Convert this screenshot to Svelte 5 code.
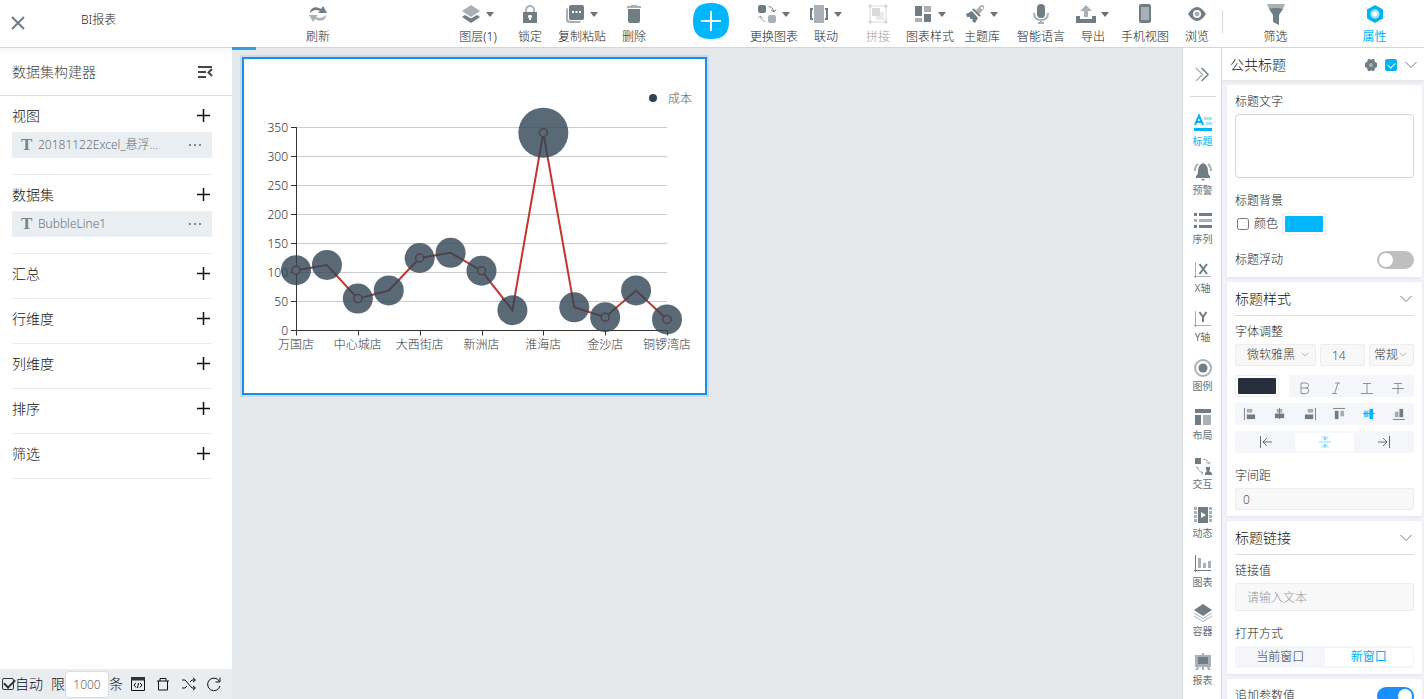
<script>
  // icon layers: [path, style], every icon is drawn on an 18x18 grid
  const icons = {
    refresh: [
      ['M1 8C1 4 5 1 10 3L12 4L14 1L18 8L9 8L11 6C7 4 4 5 1 8Z', 'dark'],
      ['M17 10C17 14 13 17 8 15L6 14L4 17L0 10L9 10L7 12C11 14 14 13 17 10Z', 'light']
    ],
    layers: [
      ['M0 12L3 10L9 13.5L15 10L18 12L9 18Z', 'dark'],
      ['M9 0L18 6L9 12L0 6Z', 'light']
    ],
    lock: [
      ['M5 8V5A4 4 0 0 1 13 5V8', 'light-line'],
      ['M2 7H16V18H2ZM9 10A1.5 1.5 0 0 0 8 13V15H10V13A1.5 1.5 0 0 0 9 10Z', 'dark']
    ],
    copy: [
      ['M2 3V13Q2 16 5 16H15Q15 18 12 18H3Q0 18 0 15V6Q0 3 2 3Z', 'light'],
      ['M5 0H16Q18 0 18 2V13Q18 15 16 15H5Q3 15 3 13V2Q3 0 5 0ZM6 6V8H8V6ZM9.5 6V8H11.5V6ZM13 6V8H15V6Z', 'dark']
    ],
    trash: [
      ['M2 1H6V0H12V1H16V3H2Z', 'light'],
      ['M3 4H15V16Q15 18 13 18H5Q3 18 3 16Z', 'dark']
    ],
    swap: [
      ['M2 0H6Q8 0 8 2V6Q8 8 6 8H2Q0 8 0 6V2Q0 0 2 0Z', 'dark'],
      ['M12 10H16Q18 10 18 12V16Q18 18 16 18H12Q10 18 10 16V12Q10 10 12 10Z', 'light'],
      ['M10.5 1.5Q15 2 16 7M16 7L13 5M16 7L18 4.5', 'dark-thin'],
      ['M7.5 16.5Q3 16 2 11M2 11L0 13.5M2 11L5 13', 'light-thin']
    ],
    link: [
      ['M4 0H14V18H4Z', 'light'],
      ['M3 4H1V14H3M15 4H17V14H15', 'dark-line']
    ],
    splice: [
      ['M1 1H17V17H1ZM0 0H2V2H0ZM16 0H18V2H16ZM0 16H2V18H0ZM16 16H18V18H16Z', 'light-thin'],
      ['M3 3H11V11H3Z', 'light'],
      ['M11 7H15V15H7V11H11Z', 'faint']
    ],
    tiles: [
      ['M1 1H8V11H1ZM10 9H17V17H10Z', 'dark'],
      ['M1 13H8V17H1ZM10 1H17V7H10Z', 'light']
    ],
    brush: [
      ['M10 5L14 1Q16 -1 18 1Q19 3 17 5L13 9ZM15 2V4H17V2Z', 'light'],
      ['M0 9L6 6L12 13L9 18L6 16L7 14L4 14L4 12L1 12Z', 'dark'],
      ['M7 4L14 11', 'dark-line']
    ],
    mic: [
      ['M9 -1A4 4 0 0 1 13 3V9A4 4 0 0 1 5 9V3A4 4 0 0 1 9 -1Z', 'dark'],
      ['M2 8Q2 15 9 15Q16 15 16 8M9 15V18M6 18H12', 'light-line']
    ],
    export: [
      ['M9 0L15 6H11V12H7V6H3Z', 'light'],
      ['M1 11V16H17V11', 'dark-bold']
    ],
    phone: [
      ['M5 -1H13Q15 -1 15 1V16Q15 18 13 18H5Q3 18 3 16V1Q3 -1 5 -1ZM5 2V15H13V2Z', 'dark'],
      ['M5 2H13V15H5Z', 'light']
    ],
    eye: [
      ['M0 9Q9 -5 18 9Q9 23 0 9ZM9 5A4 4 0 0 0 9 13A4 4 0 0 0 9 5Z', 'dark'],
      ['M9 6.5A2.5 2.5 0 0 1 9 11.5A2.5 2.5 0 0 1 9 6.5Z', 'light']
    ],
    filter: [
      ['M0 -1H18L16 4H2Z', 'light'],
      ['M2 4Q8 2 16 4L12 10V20L6 17V10Z', 'dark']
    ],
    hexagon: [
      ['M9 0L17 4.5V13.5L9 18L1 13.5V4.5Z', 'dark'],
      ['M9 4.5A4.5 4.5 0 0 1 9 13.5A4.5 4.5 0 0 1 9 4.5Z', 'paper'],
      ['M9 4.5A4.5 4.5 0 0 1 9 13.5A4.5 4.5 0 0 1 9 4.5Z', 'faint'],
      ['M9 6.5A2.5 2.5 0 0 1 9 11.5A2.5 2.5 0 0 1 9 6.5Z', 'paper']
    ],
    title: [
      ['M1 11L5 1.5L9 11M2.5 8H7.5', 'dark-line'],
      ['M0 14H18V17H0Z', 'dark'],
      ['M10 3H18V6H10ZM12 8H18V11H12Z', 'faint']
    ],
    bell: [
      ['M9 0Q14 2 14 8Q14 12 16 13V15H2V13Q4 12 4 8Q4 2 9 0ZM7 16H11L9 18Z', 'dark'],
      ['M4 1Q1 3 1 8M14 1Q17 3 17 8', 'light-line']
    ],
    list: [
      ['M0 1H3V4H0ZM5 1H18V4H5ZM0 13H3V16H0ZM5 13H18V16H5Z', 'dark'],
      ['M0 7H3V10H0ZM5 7H18V10H5Z', 'light']
    ],
    xAxis: [
      ['M1.5 1V17M0 15.5H17', 'light-thin'],
      ['M5.5 3L13 13M13 3L5.5 13', 'dark-line']
    ],
    yAxis: [
      ['M1.5 1V17M0 15.5H17', 'light-thin'],
      ['M5.5 2L9 7L12.5 2M9 7V12', 'dark-line']
    ],
    legend: [
      ['M9 1A8 8 0 0 1 9 17A8 8 0 0 1 9 1Z', 'light-line'],
      ['M9 4.5A4.5 4.5 0 0 1 9 13.5A4.5 4.5 0 0 1 9 4.5Z', 'dark']
    ],
    layout: [
      ['M1 1H17V5H1ZM1 7H7V17H1Z', 'dark'],
      ['M9 7H17V17H9Z', 'light']
    ],
    interact: [
      ['M1 1H7V7H1ZM12 10H16V13L15 14L18 16V18H11V16L13 14L12 13Z', 'dark'],
      ['M9 2Q14 2 15 6M12 5L15 7L17 5M2 9L4 12M4 10Q4 15 9 16M7 14L9 16L7 18', 'light-thin']
    ],
    film: [
      ['M4 1H14V17H4ZM7 6V12L12 9Z', 'dark'],
      ['M0 1H3V4H0ZM0 5H3V8H0ZM0 9H3V12H0ZM0 13H3V16H0ZM15 1H18V4H15ZM15 5H18V8H15ZM15 9H18V12H15ZM15 13H18V16H15Z', 'light']
    ],
    bars: [
      ['M1.5 0V17M0 15.5H17', 'dark-thin'],
      ['M4 3H7V13H4ZM9 8H12V13H9ZM14 6H17V13H14Z', 'light']
    ],
    stack: [
      ['M9 0L18 6L9 12L0 6Z', 'dark'],
      ['M0 9L9 14.5L18 9M0 12L9 17.5L18 12', 'light-thin']
    ],
    board: [
      ['M8 0H10V2H17V14H15L17 17H14L13 14H10V17H8V14H5L4 17H1L3 14H1V2H8ZM4 4V11H14V4Z', 'light'],
      ['M4 4H14V11H4Z', 'dark']
    ]
  };

  const editTools = [
    { icon: 'layers', label: '图层(1)', menu: true },
    { icon: 'lock', label: '锁定' },
    { icon: 'copy', label: '复制粘贴', menu: true },
    { icon: 'trash', label: '删除' }
  ];
  const chartTools = [
    { icon: 'swap', label: '更换图表', menu: true },
    { icon: 'link', label: '联动', menu: true },
    { icon: 'splice', label: '拼接', disabled: true },
    { icon: 'tiles', label: '图表样式', menu: true },
    { icon: 'brush', label: '主题库', menu: true }
  ];
  const pageTools = [
    { icon: 'mic', label: '智能语言' },
    { icon: 'export', label: '导出', menu: true },
    { icon: 'phone', label: '手机视图' },
    { icon: 'eye', label: '浏览' }
  ];

  const sections = [
    { name: '视图', item: '20181122Excel_悬浮...' },
    { name: '数据集', item: 'BubbleLine1' },
    { name: '汇总' },
    { name: '行维度' },
    { name: '列维度' },
    { name: '排序' },
    { name: '筛选' }
  ];

  const rail = [
    ['title', '标题'], ['bell', '预警'], ['list', '序列'], ['xAxis', 'X轴'],
    ['yAxis', 'Y轴'], ['legend', '图例'], ['layout', '布局'], ['interact', '交互'],
    ['film', '动态'], ['bars', '图表'], ['stack', '容器'], ['board', '报表']
  ];

  const alignIcons = [
    ['左对齐', 'M0.5 0V13', 'M3 1H9V5H3Z', 'M3 7H12V12H3Z'],
    ['水平居中', 'M6 0V12', 'M3 1H9V5H3Z', 'M1 6H11V11H1Z'],
    ['右对齐', 'M12.5 0V13', 'M4 1H10V5H4Z', 'M1 7H10V12H1Z'],
    ['顶对齐', 'M0 0.5H13', 'M8 3H12V9H8Z', 'M2 3H6V12H2Z'],
    ['垂直居中', 'M0 6H13', 'M1 3H6V10H1Z', 'M7 1H11V12H7Z'],
    ['底对齐', 'M0 12.5H13', 'M2 4H6V10H2Z', 'M7 1H11V10H7Z']
  ];

  const values = [104, 113, 55, 69, 125, 134, 103, 35, 341, 40, 23, 69, 19];
  const shops = ['万国店', '中心城店', '大西街店', '新洲店', '淮海店', '金沙店', '铜锣湾店'];
  const ticks = [0, 50, 100, 150, 200, 250, 300, 350];

  const left = 52;
  const bottom = 271.5;
  const width = 371;
  const px = (i) => left + (i * width) / (values.length - 1);
  const py = (v) => bottom - v * 0.58;
  const line = values.map((v, i) => px(i) + ',' + py(v)).join(' ');

  let activeTab = $state('标题');
  let auto = $state(true);
  let limit = $state('1000');
  let titleText = $state('');
  let useColor = $state(false);
  let floating = $state(false);
  let append = $state(true);
  let spacing = $state('0');
  let align = $state('垂直居中');
  let target = $state('新窗口');
</script>

{#snippet icon(name)}
  <svg class="icon" viewBox="0 0 18 18" aria-hidden="true">
    {#each icons[name] as [d, kind]}
      <path {d} class={kind} fill-rule="evenodd" />
    {/each}
  </svg>
{/snippet}

{#snippet tool(t)}
  <button class="tool" disabled={t.disabled}>
    <span class="tool-icon">
      {@render icon(t.icon)}
      {#if t.menu}<span class="caret"></span>{/if}
    </span>
    <span>{t.label}</span>
  </button>
{/snippet}

{#snippet chevron()}
  <svg class="chevron" viewBox="0 0 12 8" aria-hidden="true"><path d="M0.5 1L6 6.5L11.5 1" /></svg>
{/snippet}

<div class="app">
  <header>
    <div class="brand">
      <button class="close" aria-label="关闭">
        <svg viewBox="0 0 14 14"><path d="M1 1L13 13M13 1L1 13" /></svg>
      </button>
      <span class="name">BI报表</span>
    </div>
    <div class="first">{@render tool({ icon: 'refresh', label: '刷新' })}</div>
    <nav class="tools">
      {#each editTools as t}{@render tool(t)}{/each}
      <button class="add" aria-label="添加">
        <svg viewBox="0 0 36 36">
          <path class="blob" d="M18 0C31 0 36 6 36 18S31 36 18 36S0 30 0 18S5 0 18 0Z" />
          <path class="cross" d="M18 8V28M8 18H28" />
        </svg>
      </button>
      {#each chartTools as t}{@render tool(t)}{/each}
      <span class="gap"></span>
      {#each pageTools as t}{@render tool(t)}{/each}
    </nav>
    <div class="modes">
      {@render tool({ icon: 'filter', label: '筛选' })}
      <div class="on">{@render tool({ icon: 'hexagon', label: '属性' })}</div>
    </div>
  </header>

  <main>
    <aside class="builder">
      <div class="builder-head">
        <h2>数据集构建器</h2>
        <button aria-label="收起">
          <svg class="fold" viewBox="0 0 14 12"><path d="M0 1H14M0 6H8M0 11H8M14 3L10.5 6.5L14 10" /></svg>
        </button>
      </div>
      <div class="sections">
        {#each sections as s}
          <section>
            <div class="section-head">
              <h3>{s.name}</h3>
              <button aria-label={'添加' + s.name}>
                <svg class="plus" viewBox="0 0 13 13"><path d="M6.5 0V13M0 6.5H13" /></svg>
              </button>
            </div>
            {#if s.item}
              <div class="field">
                <b>T</b>
                <span>{s.item}</span>
                <button class="dots" aria-label="更多"><i></i><i></i><i></i></button>
              </div>
            {/if}
          </section>
        {/each}
      </div>
      <footer>
        <label class="auto"><input type="checkbox" bind:checked={auto} />自动</label>
        <label class="limit">限<input type="text" bind:value={limit} />条</label>
        <div class="actions">
          <button aria-label="脚本">
            <svg viewBox="0 0 14 14"><path d="M0.5 0.5H13.5V13.5H0.5ZM5 6L3 8L5 10.5M9 6L11 8L9 10.5M7.5 6L6.5 11" /><path d="M0 0H14V3.5H0Z" class="solid" /></svg>
          </button>
          <button aria-label="清除">
            <svg viewBox="0 0 14 14"><path d="M1 4H13M4 4V1.5H10V4M2.5 4V13H11.5V4" /></svg>
          </button>
          <button aria-label="随机">
            <svg viewBox="0 0 14 14"><path d="M0 3H3L10 11H13M0 11H3L5 9M8 5L10 3H13M11 1L13.5 3L11 5M11 9L13.5 11L11 13" /></svg>
          </button>
          <button aria-label="刷新">
            <svg viewBox="0 0 14 14"><path d="M12.5 4.5A6.3 6.3 0 1 0 13 9M13 0.5V5H8.5" /></svg>
          </button>
        </div>
      </footer>
    </aside>

    <div class="canvas">
      <div class="progress"></div>
      <div class="widget">
        <svg viewBox="0 0 461 334" role="img" aria-label="成本">
          {#each ticks as t}
            <line class="grid" x1={left} x2={left + width} y1={py(t)} y2={py(t)} />
            <line class="axis" x1={left - 5} x2={left} y1={py(t)} y2={py(t)} />
            <text x="44" y={py(t) + 4} text-anchor="end">{t}</text>
          {/each}
          <path class="axis" d="M52.5 68V271.5H423.5" />
          {#each shops as shop, i}
            <line class="axis" x1={Math.round(px(i * 2)) + 0.5} x2={Math.round(px(i * 2)) + 0.5} y1={bottom} y2={bottom + 5} />
            <text x={px(i * 2)} y="290" text-anchor="middle">{shop}</text>
          {/each}
          <polyline points={line} />
          {#each values as v, i}
            {#if i % 2 == 0}<circle class="dot" cx={px(i)} cy={py(v)} r="4" />{/if}
          {/each}
          {#each values as v, i}
            <circle class="bubble" cx={px(i)} cy={py(v)} r={v > 300 ? 25 : 15} />
          {/each}
          <circle class="key" cx="409" cy="39" r="4" />
          <text class="legend" x="424" y="44">成本</text>
        </svg>
      </div>
    </div>

    <nav class="rail">
      <button class="expand" aria-label="展开">
        <svg viewBox="0 0 16 16"><path class="light-thin" d="M1 1L8 8L1 15" /><path d="M7 1L14 8L7 15" /></svg>
      </button>
      {#each rail as [name, label]}
        <button class="tab" class:active={activeTab == label} onclick={() => (activeTab = label)}>
          {@render icon(name)}
          <span>{label}</span>
        </button>
      {/each}
    </nav>

    <aside class="panel">
      <div class="panel-head">
        <h2>公共标题</h2>
        <svg class="gear" viewBox="0 0 12 12" aria-hidden="true">
          <path d="M3 0H5L6 1L7 0H9L10 3L12 4V8L10 9L9 12H7L6 11L5 12H3L2 9L0 8V4L2 3Z" />
          <circle cx="6" cy="6" r="2" />
        </svg>
        <input type="checkbox" class="tick" checked aria-label="显示标题" />
        {@render chevron()}
      </div>

      <div class="cards">
        <div class="card">
          <label class="caption" for="title-text">标题文字</label>
          <textarea id="title-text" bind:value={titleText}></textarea>
          <div class="caption space">标题背景</div>
          <div class="background">
            <label><input type="checkbox" class="box" bind:checked={useColor} />颜色</label>
            <button class="swatch" aria-label="背景颜色"><span class="blue"></span></button>
          </div>
          <label class="switch-row"><span>标题浮动</span><input type="checkbox" class="switch" bind:checked={floating} /></label>
        </div>

        <div class="card">
          <div class="card-head"><h3>标题样式</h3>{@render chevron()}</div>
          <div class="caption">字体调整</div>
          <div class="fonts">
            <span class="select wide">
              <select aria-label="字体"><option>微软雅黑</option></select>{@render chevron()}
            </span>
            <input class="size" type="text" value="14" aria-label="字号" />
            <span class="select">
              <select aria-label="字重"><option>常规</option></select>{@render chevron()}
            </span>
          </div>
          <div class="styles">
            <button class="swatch" aria-label="文字颜色"><span class="ink"></span></button>
            <div class="bar">
              <button aria-label="粗体"><svg viewBox="0 0 12 12"><path d="M2 1H7A2.5 2.5 0 0 1 7 6H2M7 6A2.7 2.7 0 0 1 7 11.5H2V1" /></svg></button>
              <button aria-label="斜体"><svg viewBox="0 0 12 12"><path d="M5 1H10M2 11.5H7M8 1L4.5 11.5" /></svg></button>
              <button aria-label="下划线"><svg viewBox="0 0 12 12"><path d="M2 1.5H10M6 1.5V11M0 11.5H12" /></svg></button>
              <button aria-label="删除线"><svg viewBox="0 0 12 12"><path d="M2 1.5H10M6 1.5V12M0 6.5H12" /></svg></button>
            </div>
          </div>
          <div class="bar">
            {#each alignIcons as [label, rule, light, dark]}
              <button class:active={align == label} aria-label={label} onclick={() => (align = label)}>
                <svg viewBox="0 0 13 13"><path d={rule} /><path class="light" d={light} /><path class="dark" d={dark} /></svg>
              </button>
            {/each}
          </div>
          <div class="bar picks">
            <button aria-label="靠左"><svg viewBox="0 0 12 12"><path d="M0.5 0V12M12 6H3M7 2L3 6L7 10" /></svg></button>
            <button class="active picked" aria-label="居中"><svg viewBox="0 0 12 12"><path class="light-thin" d="M0 6H12" /><path d="M3 0.5L6 3.5L9 0.5M3 11.5L6 8.5L9 11.5M6 0V4M6 8V12" /></svg></button>
            <button aria-label="靠右"><svg viewBox="0 0 12 12"><path d="M11.5 0V12M0 6H9M5 2L9 6L5 10" /></svg></button>
          </div>
          <label class="caption space" for="spacing">字间距</label>
          <input class="text" id="spacing" type="text" bind:value={spacing} />
        </div>

        <div class="card">
          <div class="card-head"><h3>标题链接</h3>{@render chevron()}</div>
          <label class="caption" for="link-value">链接值</label>
          <input class="text tall" id="link-value" type="text" placeholder="请输入文本" />
          <div class="caption space">打开方式</div>
          <div class="bar picks">
            {#each ['当前窗口', '新窗口'] as t}
              <button class:active={target == t} class:picked={target == t} onclick={() => (target = t)}>{t}</button>
            {/each}
          </div>
        </div>

        <div class="card">
          <label class="switch-row"><span>追加参数值</span><input type="checkbox" class="switch" bind:checked={append} /></label>
        </div>
      </div>
    </aside>
  </main>
</div>

<style>
  :global(body) {
    margin: 0;
    overflow: hidden;
  }
  .app {
    height: 100vh;
    display: flex;
    flex-direction: column;
    font: 300 12px/16px "Noto Sans", "Noto Sans CJK SC", sans-serif;
    color: #222;
    background: #e5e9ec;
  }
  .app * {
    box-sizing: border-box;
  }
  button, input, select, textarea {
    font: inherit;
    color: inherit;
    margin: 0;
  }
  button {
    padding: 0;
    border: 0;
    background: none;
    cursor: pointer;
  }
  h2, h3 {
    margin: 0;
    font-size: 14px;
    font-weight: inherit;
    line-height: 22px;
  }
  svg {
    display: block;
    fill: none;
    stroke: currentColor;
    overflow: visible;
  }

  /* icon layers */
  .icon {
    width: 18px;
    height: 18px;
    color: #707d85;
  }
  .dark, .light, .faint, .paper {
    fill: currentColor;
    stroke: none;
  }
  .light, .light-line, .light-thin {
    opacity: .6;
  }
  .faint {
    opacity: .35;
  }
  .paper {
    fill: #fff;
  }
  .dark-line, .light-line {
    stroke-width: 2;
  }
  .dark-bold {
    stroke-width: 4;
  }

  /* top bar */
  header {
    flex: none;
    display: flex;
    height: 48px;
    background: #fff;
    border-bottom: 1px solid #d3d6d8;
  }
  .brand {
    width: 232px;
    display: flex;
    align-items: flex-start;
    padding: 12px 0 0 11px;
  }
  .close {
    color: #707d85;
    margin-top: 4px;
  }
  .close svg {
    width: 14px;
    height: 14px;
    stroke-width: 2;
  }
  .name {
    margin-left: 56px;
  }
  .first {
    margin-left: 60px;
  }
  .tools {
    flex: 1;
    display: flex;
    justify-content: flex-end;
  }
  .tool {
    width: 52px;
    padding-top: 5px;
    display: flex;
    flex-direction: column;
    align-items: center;
    gap: 6px;
    white-space: nowrap;
  }
  .tool:disabled {
    opacity: .45;
  }
  .tool-icon {
    display: flex;
    align-items: center;
    gap: 6px;
  }
  .caret {
    border: 4px solid transparent;
    border-top: 5px solid #707070;
    border-bottom: 0;
  }
  .add {
    margin: 0 19px 0 33px;
  }
  .add svg {
    width: 36px;
    height: 36px;
    margin-bottom: 6px;
    stroke: none;
  }
  .blob {
    fill: #00b7ff;
  }
  .cross {
    stroke: #fff;
    stroke-width: 2;
  }
  .gap {
    width: 7px;
  }
  .modes {
    position: relative;
    width: 201px;
    padding-left: 3px;
    display: flex;
    justify-content: space-around;
  }
  .modes::before {
    content: "";
    position: absolute;
    left: -1px;
    top: 11px;
    height: 22px;
    border-left: 1px solid #d3d6d8;
  }
  .on, .on .icon {
    color: #00b2f7;
    font-weight: 400;
  }

  main {
    flex: 1;
    min-height: 0;
    display: flex;
  }

  /* dataset builder */
  .builder {
    width: 232px;
    display: flex;
    flex-direction: column;
    background: #fff;
    color: #111;
  }
  .builder-head {
    height: 48px;
    display: flex;
    align-items: center;
    justify-content: space-between;
    padding: 0 20px 0 12px;
    border-bottom: 1px solid #dcdfe2;
    background: linear-gradient(#f6f6f6, #fff 8px);
    color: #444;
  }
  .fold {
    width: 14px;
    height: 12px;
    stroke-width: 2;
  }
  .sections {
    flex: 1;
    padding: 0 20px 0 12px;
  }
  section {
    padding: 9px 0 13px;
    border-bottom: 1px solid #e8ecf0;
  }
  .section-head {
    display: flex;
    justify-content: space-between;
    align-items: flex-start;
    padding-right: 2px;
  }
  .plus {
    width: 13px;
    height: 13px;
    margin-top: 4px;
    stroke-width: 1.5;
  }
  .field {
    height: 26px;
    margin: 5px 0 3px;
    padding: 0 11px 0 9px;
    display: flex;
    align-items: center;
    background: #e9eef3;
    border-radius: 2px;
    color: #707070;
  }
  .field b {
    width: 17px;
    font: 700 17px/20px "Liberation Serif", serif;
    color: #808080;
  }
  .dots {
    margin-left: auto;
    display: flex;
    gap: 3px;
  }
  .dots i {
    width: 2px;
    height: 2px;
    background: #888;
  }
  footer {
    height: 30px;
    display: flex;
    align-items: center;
    gap: 8px;
    padding: 0 11px 0 2px;
    background: #e9edf0;
    font-size: 14px;
  }
  footer label {
    display: flex;
    align-items: center;
    white-space: nowrap;
  }
  .auto input {
    appearance: none;
    position: relative;
    width: 12px;
    height: 12px;
    margin-right: 1px;
    border: 1px solid #333;
    border-radius: 2px;
  }
  .auto input:checked::before {
    content: "";
    position: absolute;
    left: 3px;
    top: -2px;
    width: 5px;
    height: 9px;
    border: solid #333;
    border-width: 0 2px 2px 0;
    transform: rotate(45deg);
  }
  .limit input {
    width: 44px;
    height: 27px;
    padding: 0;
    text-align: center;
    font-size: 12px;
    color: #666;
    border: 1px solid #ddd;
    border-radius: 4px;
  }
  .actions {
    flex: 1;
    display: flex;
    justify-content: space-between;
  }
  .actions svg {
    width: 14px;
    height: 14px;
  }
  .solid {
    fill: #333;
    stroke: none;
  }

  /* canvas */
  .canvas {
    position: relative;
    flex: 1;
    background: #e5e9ec;
  }
  .progress {
    position: absolute;
    top: -1px;
    width: 24px;
    height: 3px;
    background: #349fe0;
  }
  .widget {
    position: absolute;
    left: 10px;
    top: 9px;
    width: 465px;
    border: 2px solid #1890eb;
    background: #fff;
    box-shadow: 0 0 0 2px #cdd8ec;
  }
  .grid {
    stroke: #ccc;
  }
  .axis {
    stroke: #333;
  }
  polyline {
    stroke: #c23531;
    stroke-width: 2;
  }
  .dot {
    fill: #fff;
    stroke: #c23531;
    stroke-width: 1.5;
  }
  .bubble {
    fill: #2f4554;
    fill-opacity: .8;
    stroke: none;
  }
  .key {
    fill: #2f4554;
    stroke: none;
  }
  text {
    fill: #333;
    stroke: none;
    font-size: 12px;
  }
  .legend {
    fill: #555;
  }

  /* icon rail */
  .rail {
    width: 40px;
    padding-left: 1px;
    display: flex;
    flex-direction: column;
    align-items: center;
    background: #fff;
    border: 1px solid #d6dadd;
    border-width: 0 1px;
    overflow: hidden;
  }
  .expand {
    flex: none;
    width: 26px;
    height: 49px;
    display: grid;
    place-items: center;
    border-bottom: 1px solid #d6dadd;
    margin-bottom: 12px;
    padding-top: 4px;
    color: #707d85;
  }
  .expand svg {
    width: 15px;
    height: 15px;
    stroke-width: 1.5;
  }
  .tab {
    flex: none;
    height: 49px;
    padding-top: 5px;
    display: flex;
    flex-direction: column;
    align-items: center;
    gap: 2px;
    font-size: 10px;
    font-weight: 400;
    line-height: 14px;
    color: #667078;
  }
  .tab.active, .tab.active .icon {
    color: #00b2f7;
  }

  /* property panel */
  .panel {
    width: 202px;
    display: flex;
    flex-direction: column;
    background: #f1f3f8;
    overflow: hidden;
  }
  .panel-head {
    flex: none;
    height: 32px;
    display: flex;
    align-items: center;
    gap: 8px;
    padding: 1px 7px 0 8px;
    background: #fff;
    box-shadow: 0 1px 4px #ddd;
    color: #111;
  }
  .panel-head h2 {
    flex: 1;
  }
  .gear {
    width: 12px;
    height: 12px;
    fill: #707d85;
    stroke: none;
  }
  .gear circle {
    fill: #a9b1b6;
  }
  .tick {
    appearance: none;
    position: relative;
    width: 12px;
    height: 12px;
    border: 1px solid #00b2f7;
    border-radius: 2px;
  }
  .tick:checked {
    background: #00b2f7;
  }
  .tick:checked::before {
    content: "";
    position: absolute;
    left: 3px;
    top: 1px;
    width: 4px;
    height: 6px;
    border: solid #fff;
    border-width: 0 1px 1px 0;
    transform: rotate(45deg);
  }
  .chevron {
    width: 12px;
    height: 8px;
    color: #707d85;
  }
  .cards {
    padding: 5px 2px 0 5px;
    display: flex;
    flex-direction: column;
    gap: 5px;
  }
  .card {
    padding: 8px 8px 6px;
    background: #fff;
    border-radius: 2px;
    box-shadow: 0 1px 3px #e0e2e8;
  }
  .card-head {
    display: flex;
    align-items: center;
    justify-content: space-between;
    height: 26px;
    padding: 0 2px 8px 0;
    margin-bottom: 7px;
    border-bottom: 1px solid #dcdfe2;
    color: #111;
  }
  .caption {
    display: block;
    padding-top: 1px;
    margin-bottom: 4px;
  }
  .space {
    margin-top: 14px;
  }
  textarea {
    display: block;
    width: 100%;
    height: 64px;
    border: 1px solid #d3d6d8;
    border-radius: 4px;
    resize: none;
  }
  .background {
    display: flex;
    align-items: center;
    gap: 4px;
  }
  .background label {
    display: flex;
    align-items: center;
  }
  .box {
    width: 12px;
    height: 12px;
    margin: 0 5px 0 2px;
  }
  .swatch {
    width: 44px;
    height: 22px;
    padding: 2px;
    border: 1px solid #eee;
    border-radius: 2px;
  }
  .swatch span {
    display: block;
    height: 16px;
    border-radius: 1px;
  }
  .blue {
    background: #00b7ff;
  }
  .ink {
    background: #282f3c;
  }
  .switch-row {
    display: flex;
    align-items: center;
    justify-content: space-between;
    height: 18px;
  }
  .background + .switch-row {
    margin: 16px 0 2px;
  }
  .switch {
    appearance: none;
    width: 37px;
    height: 18px;
    border-radius: 9px;
    background: #bfbfbf;
    padding: 2px;
  }
  .switch::before {
    content: "";
    display: block;
    width: 14px;
    height: 14px;
    border-radius: 7px;
    background: #fff;
  }
  .switch:checked {
    background: #1890ff;
  }
  .switch:checked::before {
    margin-left: auto;
  }
  .fonts {
    display: grid;
    grid-template-columns: 81fr 45fr 45fr;
    gap: 4px;
    height: 22px;
    color: #444;
  }
  .select {
    position: relative;
  }
  select, .size, .text {
    width: 100%;
    height: 22px;
    padding: 0 7px;
    border: 1px solid #ededed;
    border-radius: 2px;
    background: #f8f8f8;
    color: #555;
  }
  select {
    appearance: none;
    padding: 0 4px;
    color: #333;
  }
  .wide select {
    padding-left: 11px;
  }
  .size {
    min-width: 0;
    padding: 0 11px;
  }
  .select .chevron {
    position: absolute;
    right: 7px;
    top: 8px;
    width: 8px;
    height: 5px;
    color: #999;
  }
  .tall {
    height: 28px;
    padding: 0 11px;
  }
  .tall::placeholder {
    color: #999;
  }
  .styles {
    display: flex;
    gap: 10px;
    margin-top: 9px;
  }
  .bar {
    flex: 1;
    display: flex;
    height: 22px;
    background: #f4f6fa;
    border-radius: 2px;
  }
  .bar + .bar, .styles + .bar {
    margin-top: 6px;
  }
  .bar button {
    flex: 1;
    display: grid;
    place-items: center;
    color: #707d85;
  }
  .bar svg {
    width: 12px;
    height: 12px;
  }
  .styles .bar {
    padding-top: 4px;
  }
  .styles .bar svg {
    opacity: .8;
  }
  .bar.picks {
    padding: 2px 1px;
  }
  .bar.picks button {
    color: #333;
  }
  .bar.picks svg {
    opacity: .7;
  }
  .bar .picked {
    background: #fff;
    border-radius: 2px;
    font-weight: 400;
  }
  .bar button.active, .bar.picks button.active {
    color: #00b2f7;
  }
</style>
